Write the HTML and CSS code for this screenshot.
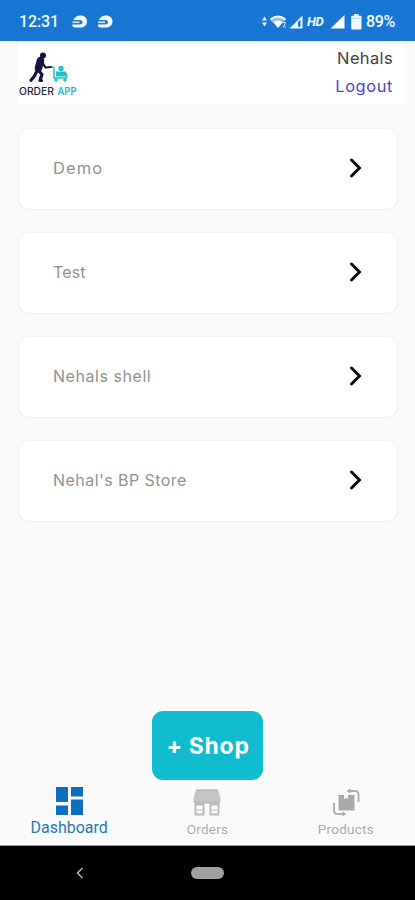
FILE: index.html
```html
<!DOCTYPE html>
<html lang="en">
<head>
<meta charset="utf-8">
<meta name="viewport" content="width=device-width, initial-scale=1">
<title>Order App</title>
<link rel="stylesheet" href="styles.css">
</head>
<body>
<div class="screen">
  <div class="status">
    <span class="clock">12:31</span>
    <svg class="notice" width="42" height="14" viewBox="0 0 42 14">
      <defs>
        <g id="face">
          <path d="M1.500 5C2.500 2 5 .5 8.500 .5c4 0 6.500 2.500 6.500 6s-2.500 6-6.500 6H3C1.200 12.500.3 11.500.3 9.500h7.200c2 0 3-.8 3-2S9.500 5 8 5z" fill="#f4f9ff"/>
          <path d="M.5 7.200h7" stroke="#c7def6" stroke-width="1.800"/>
        </g>
      </defs>
      <use href="#face"/>
      <use href="#face" x="25.500"/>
    </svg>
    <svg class="signals" width="41" height="16" viewBox="0 0 41 16">
      <path d="M0 6.500L2.500 2.500 5 6.500zM0 8.500h5L2.500 12.500z" fill="#e8f3ff"/>
      <path d="M8 5.500Q16 -1.500 24 5.500L16 14z" fill="#8fbdec"/>
      <path d="M8.500 5.500Q16 -.5 23.500 5.500" fill="none" stroke="#f2f8ff" stroke-width="2"/>
      <path d="M11.500 8Q16 5 20.500 8L16 14z" fill="#fff"/>
      <path d="M21 8.500h2.500L21.500 13h2" fill="none" stroke="#d4e7fa" stroke-width="1"/>
      <path d="M40.500 1.500V14.500H27.500z" fill="#eef6ff"/>
      <path d="M38.500 5.500v7.300H36V8z" fill="#1976d2"/>
    </svg>
    <span class="hd">HD</span>
    <svg class="cell" width="15" height="14" viewBox="0 0 15 14"><path d="M14.500 0V13.500H.5z" fill="#fff"/></svg>
    <svg class="battery" width="11" height="16" viewBox="0 0 11 16"><path d="M3 0h4.500v1.800H9.500q1 0 1 1V14.500q0 1-1 1H1.200q-1 0-1-1V2.800q0-1 1-1H3z" fill="#eef6ff"/><path d="M1.500 4.300h7.800" stroke="#a6ccf1"/></svg>
    <span class="percent">89%</span>
  </div>

  <header class="header">
    <svg class="logo" width="60" height="46" viewBox="0 0 60 46" role="img">
      <g fill="none" stroke="#15153d" stroke-linecap="round" stroke-linejoin="round">
        <circle cx="24" cy="3.500" r="3" fill="#15153d" stroke="none"/>
        <path d="M21.500 8.500L19.500 16" stroke-width="7.500"/>
        <path d="M23 10l3.500 5.500 5.500-.5" stroke-width="2.200"/>
        <path d="M18 19l-2.500 5-3.500 4.300" stroke-width="3.200"/>
        <path d="M20 19l3 3.500-2 6h1.500" stroke-width="3.200"/>
      </g>
      <g stroke="#26bcc8" fill="none" stroke-width="1.500">
        <path d="M33 15l2 .5V26h12.500V21"/>
        <path d="M37 22h10" stroke-width="5"/>
        <circle cx="42" cy="16.500" r="2.700" fill="#26bcc8" stroke="none"/>
        <circle cx="37" cy="28" r="1"/><circle cx="46" cy="28" r="1"/>
      </g>
      <text class="brand" x="0" y="42.500" textLength="35" lengthAdjust="spacingAndGlyphs" fill="#25273d">ORDER</text>
      <text class="brand app" x="38.500" y="42.500" textLength="19" lengthAdjust="spacingAndGlyphs" fill="#20b6c5">APP</text>
    </svg>
    <div class="account">
      <span class="user">Nehals</span>
      <a class="logout">Logout</a>
    </div>
  </header>

  <main class="shops">
    <div class="card"><span class="name short">Demo</span><svg class="chevron" width="14" height="20" viewBox="0 0 14 20"><path d="M2.500 2l8 8-8 8"/></svg></div>
    <div class="card"><span class="name tight">Test</span><svg class="chevron" width="14" height="20" viewBox="0 0 14 20"><path d="M2.500 2l8 8-8 8"/></svg></div>
    <div class="card"><span class="name">Nehals shell</span><svg class="chevron" width="14" height="20" viewBox="0 0 14 20"><path d="M2.500 2l8 8-8 8"/></svg></div>
    <div class="card"><span class="name long">Nehal's BP Store</span><svg class="chevron" width="14" height="20" viewBox="0 0 14 20"><path d="M2.500 2l8 8-8 8"/></svg></div>
  </main>

  <button class="add">+ Shop</button>

  <nav class="tabs">
    <div class="tab active">
      <svg width="30" height="30" viewBox="0 0 30 30" fill="#0d6fbe"><path d="M2 1h12v15H2zM17 1h12v9.500H17zM2 19.500h12V29H2zM17 13.500h12V29H17z"/></svg>
      <span>Dashboard</span>
    </div>
    <div class="tab">
      <svg width="30" height="30" viewBox="0 0 30 30"><path d="M4 4h22l2.500 8v4h-27v-4z" fill="#c4c4c4"/><path d="M4 4h22" stroke="#aaa"/><path d="M3.500 16v12.500h8v-10h-8M18.500 16v12.500h8v-10h-8M2 16.500h26" fill="none" stroke="#bcbcbc" stroke-width="2"/><path d="M5 24h5M20 24h5" stroke="#bcbcbc"/></svg>
      <span>Orders</span>
    </div>
    <div class="tab products">
      <svg width="30" height="30" viewBox="0 0 30 30"><path d="M7.500 9H13v4l2-1 2 1V9h6.500v15.500h-16z" fill="#a9a9a9"/><path d="M18 5h6q3.500 0 3.500 3.500V16M13 28H6.500Q3 28 3 24.500V17" fill="none" stroke="#b0b0b0" stroke-width="2"/><path d="M15.500 5l4-2.500v5zM15.500 28l-4-2.500v5z" fill="#aaa"/></svg>
      <span>Products</span>
    </div>
  </nav>

  <div class="system">
    <svg class="back" width="8" height="12" viewBox="0 0 8 12"><path d="M6.500 1L1.500 6l5 5" fill="none" stroke="#aaa" stroke-width="1.700"/></svg>
    <span class="pill"></span>
  </div>
</div>
</body>
</html>
```
FILE: styles.css
```css
* { box-sizing: border-box; }
body { margin: 0; background: #fafafa; font-family: Inter, "Open Sans", sans-serif; }
.screen { width: 415px; height: 900px; display: flex; flex-direction: column; overflow: hidden; background: #fafafa; }
.status { flex: none; height: 41px; background: #1976d2; display: flex; align-items: center; padding: 2px 0 0 19px; color: #f4f9ff; font-family: Roboto, sans-serif; font-weight: 500; white-space: nowrap; }
.clock { width: 53px; font-size: 16px; letter-spacing: -0.1px; }
.signals { margin-left: 148px; }
.hd { margin-left: 4px; width: 19px; font-size: 13px; font-style: italic; font-weight: 700; letter-spacing: -0.4px; }
.cell { margin-left: 4px; }
.battery { margin-left: 6px; }
.percent { margin-left: 4px; font-size: 16px; letter-spacing: -0.3px; }
.header { flex: none; height: 63px; margin: 0 10px 0 18px; background: #fff; display: flex; justify-content: space-between; padding: 0 12px 0 1px; }
.logo { margin-top: 11px; }
.brand { font: 500 10px Inter, sans-serif; }
.app { font-weight: 600; }
.account { display: flex; flex-direction: column; align-items: flex-end; padding-top: 3px; font-size: 16.5px; line-height: 28px; }
.user { color: #424242; letter-spacing: 0.35px; }
.logout { color: #5346c4; letter-spacing: 0.55px; }
.shops { flex: none; height: 608px; padding: 25px 18px 0 19px; display: flex; flex-direction: column; gap: 24px; }
.card { flex: none; height: 80px; background: #fff; border-radius: 10px; box-shadow: 0 0 2px rgba(0, 0, 0, 0.13); display: flex; align-items: center; justify-content: space-between; padding: 0 34px 0 34px; font-size: 16px; color: #929292; }
.name { margin-top: -2px; letter-spacing: 0.55px; }
.short { font-size: 16.5px; letter-spacing: 1.1px; }
.tight { letter-spacing: 0.15px; }
.long { letter-spacing: 0.45px; }
.chevron { margin-top: -3px; }
.chevron path { fill: none; stroke: #080808; stroke-width: 3; stroke-linecap: round; stroke-linejoin: round; }
.add { flex: none; width: 111px; height: 69px; margin: -1px auto 0; padding: 0 0 0 1px; border: 0; border-radius: 11px; background: #12bccf; color: #fff; font: 700 23px Inter, sans-serif; letter-spacing: 0.7px; white-space: nowrap; }
.tabs { flex: none; height: 66px; display: flex; border-bottom: 1px solid #9b9b9b; font-family: Roboto, sans-serif; }
.tab { flex: 1; display: flex; flex-direction: column; align-items: center; padding-top: 6px; color: #adadad; font-size: 13.500px; line-height: 18px; letter-spacing: 0.25px; }
.tab span { margin-top: 4px; }
.tab.active { color: #2778b4; font-size: 16px; letter-spacing: 0; }
.tab.active span { margin-top: 3px; }
.system { flex: none; height: 54px; background: #000; display: flex; align-items: center; padding-left: 76px; }
.pill { width: 33px; height: 12px; margin-left: 107px; border-radius: 6px; background: #a0a0a0; }
```
